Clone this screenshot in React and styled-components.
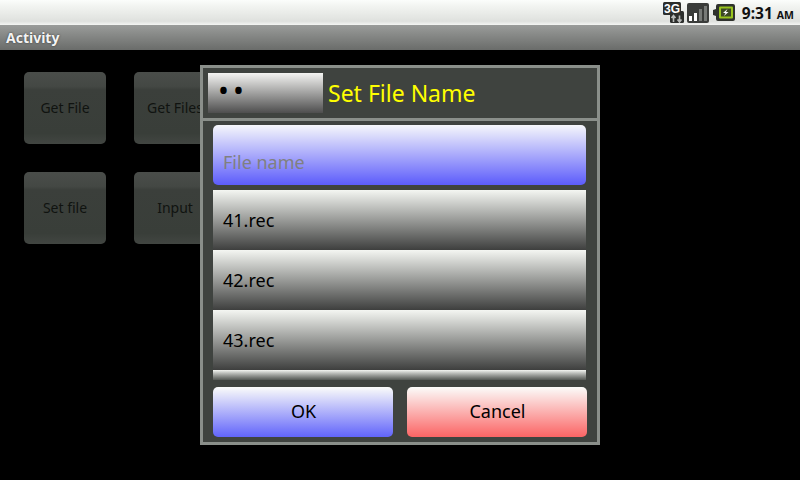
import React from 'react';
import styled, { createGlobalStyle } from 'styled-components';

const GlobalStyle = createGlobalStyle`
  html, body {
    margin: 0;
    padding: 0;
    background: #000;
  }
  body {
    font-family: "Noto Sans", "Open Sans", sans-serif;
  }
`;

const Screen = styled.div`
  position: relative;
  width: 800px;
  height: 480px;
  overflow: hidden;
  background: #000;
`;

const StatusBar = styled.div`
  height: 25px;
  box-sizing: border-box;
  display: flex;
  align-items: center;
  justify-content: flex-end;
  padding-right: 6px;
  background: linear-gradient(#fbfdfb 0%, #f2f4f1 25%, #dfe1de 85%, #f4f5f3 100%);
`;

const StatusIcon = styled.svg`
  display: block;
  flex: none;
  margin-left: ${({ $gap }) => $gap}px;
`;

const Clock = styled.div`
  margin-left: 7px;
  font-size: 15.5px;
  font-weight: 700;
  color: #111;
  white-space: nowrap;
`;

const Meridiem = styled.span`
  font-size: 10.5px;
  margin-left: 4px;
`;

const TitleBar = styled.div`
  height: 25px;
  box-sizing: border-box;
  padding-left: 6px;
  display: flex;
  align-items: center;
  background: linear-gradient(#9a9c9a, #6a6c6a);
  color: #f4f4f4;
  font-size: 14px;
  font-weight: 700;
  text-shadow: 0 0 2px #333;
`;

const Content = styled.div`
  display: grid;
  grid-template-columns: repeat(2, 82px);
  grid-auto-rows: 72px;
  column-gap: 28px;
  row-gap: 28px;
  padding: 22px 0 0 24px;
`;

const DimButton = styled.div`
  display: flex;
  align-items: center;
  justify-content: center;
  padding-bottom: 2px;
  box-sizing: border-box;
  border-radius: 5px;
  background: linear-gradient(#4a4d4a 0%, #444844 20%, #3b3f3b 25%, #393e39 85%, #424642 100%);
  color: #101310;
  font-size: 14px;
  white-space: nowrap;
  overflow: hidden;
`;

const Dialog = styled.div`
  position: absolute;
  left: 200px;
  top: 65px;
  width: 400px;
  height: 380px;
  box-sizing: border-box;
  border: 3px solid #8a8f8a;
  background: #3f433f;
  display: flex;
  flex-direction: column;
`;

const DialogHeader = styled.div`
  height: 53px;
  flex: none;
  box-sizing: border-box;
  padding: 5px 0 0 5px;
  display: flex;
  align-items: flex-start;
  border-bottom: 3px solid #8a8f8a;
`;

const PathBox = styled.div`
  width: 115px;
  height: 40px;
  box-sizing: border-box;
  padding: 0 0 8px 10px;
  display: flex;
  align-items: center;
  letter-spacing: 4px;
  color: #000;
  font-size: 29px;
  line-height: 1;
  background: linear-gradient(#f4f4f2, #4e4e4e);
`;

const DialogTitle = styled.div`
  margin-left: 5px;
  height: 40px;
  line-height: 40px;
  font-size: 23px;
  color: #ffff00;
  white-space: nowrap;
`;

const DialogBody = styled.div`
  flex: 1;
  display: flex;
  flex-direction: column;
  padding: 4px 11px 0 10px;
`;

const NameInput = styled.div`
  height: 60px;
  box-sizing: border-box;
  padding: 25px 0 0 10px;
  border-radius: 5px;
  background: linear-gradient(#f6f7fb, #5c5cfb);
  color: #808080;
  font-size: 18px;
  line-height: 24px;
`;

const FileList = styled.div`
  position: relative;
  margin-top: 5px;
  height: 190px;
  overflow: hidden;
`;

const FileRow = styled.div`
  height: 60px;
  flex: none;
  box-sizing: border-box;
  padding: 0 10px;
  display: flex;
  align-items: center;
  background: linear-gradient(#f4f6f2, #3e3f3e);
  color: #000;
  font-size: 18px;
`;

const FadeEdge = styled.div`
  position: absolute;
  left: 0;
  right: 0;
  bottom: 0;
  height: 10px;
  background: linear-gradient(rgba(63, 67, 63, 0), rgba(63, 67, 63, 0.85));
`;

const ButtonBar = styled.div`
  margin-top: 7px;
  margin-right: -1px;
  display: flex;
  justify-content: space-between;
`;

const ActionButton = styled.div`
  width: 180px;
  height: 50px;
  box-sizing: border-box;
  padding: 0 0 2px 1px;
  display: flex;
  align-items: center;
  justify-content: center;
  border-radius: 5px;
  color: #000;
  font-size: 18px;
  background: linear-gradient(#fbfcfa, ${({ $tone }) => $tone});
`;

const NetworkIcon = () => (
  <StatusIcon $gap={0} width="21" height="21" viewBox="0 0 21 21">
    <rect x="0" y="0" width="18" height="13" rx="1.5" fill="#2c2e2c" />
    <rect x="7" y="9" width="14" height="12" rx="1.5" fill="#2c2e2c" />
    <text x="1" y="11" fontFamily="Liberation Sans, sans-serif" fontWeight="700" fontSize="12" fill="#fff">3G</text>
    <path d="M10.5 20v-6M8.5 16l2-2.5 2 2.5M16.5 13.5v6M14.5 17.5l2 2.5 2-2.5" fill="none" stroke="#b8bab8" strokeWidth="1.6" />
  </StatusIcon>
);

const SignalIcon = () => (
  <StatusIcon $gap={3} width="22" height="21" viewBox="0 0 22 21">
    <rect x="0" y="1" width="22" height="20" rx="2" fill="#3a3c3a" />
    <rect x="2" y="14" width="3" height="5" fill="#fff" />
    <rect x="7" y="11" width="3" height="8" fill="#fff" />
    <rect x="12" y="7" width="3" height="12" fill="#777a77" />
    <rect x="17" y="4" width="3" height="15" fill="#777a77" />
  </StatusIcon>
);

const BatteryIcon = () => (
  <StatusIcon $gap={4} width="22" height="17" viewBox="0 0 22 17">
    <path d="M0 6l3-1V2q0-2 2-2h15q2 0 2 2v13q0 2-2 2H5q-2 0-2-2v-3l-3-1z" fill="#2f322d" />
    <rect x="6" y="2.5" width="14" height="12" rx="1" fill="#98c41e" />
    <rect x="8" y="4.5" width="10" height="8" fill="#3d4a24" />
    <path d="M14.5 5l-4.5 4h2.5l-1.5 3 4.5-4h-2.5z" fill="#fff" />
  </StatusIcon>
);

const files = ['41.rec', '42.rec', '43.rec'];

const App = () => (
  <Screen>
    <GlobalStyle />
    <StatusBar>
      <NetworkIcon />
      <SignalIcon />
      <BatteryIcon />
      <Clock>
        9:31<Meridiem>AM</Meridiem>
      </Clock>
    </StatusBar>
    <TitleBar>Activity</TitleBar>
    <Content>
      <DimButton>Get File</DimButton>
      <DimButton>Get Files</DimButton>
      <DimButton>Set file</DimButton>
      <DimButton>Input</DimButton>
    </Content>
    <Dialog>
      <DialogHeader>
        <PathBox>••</PathBox>
        <DialogTitle>Set File Name</DialogTitle>
      </DialogHeader>
      <DialogBody>
        <NameInput>File name</NameInput>
        <FileList>
          {files.map((name) => (
            <FileRow key={name}>{name}</FileRow>
          ))}
          {/* next row only peeks in above the buttons */}
          <FileRow />
          <FadeEdge />
        </FileList>
        <ButtonBar>
          <ActionButton $tone="#6164fb">OK</ActionButton>
          <ActionButton $tone="#fb6464">Cancel</ActionButton>
        </ButtonBar>
      </DialogBody>
    </Dialog>
  </Screen>
);

export default App;
